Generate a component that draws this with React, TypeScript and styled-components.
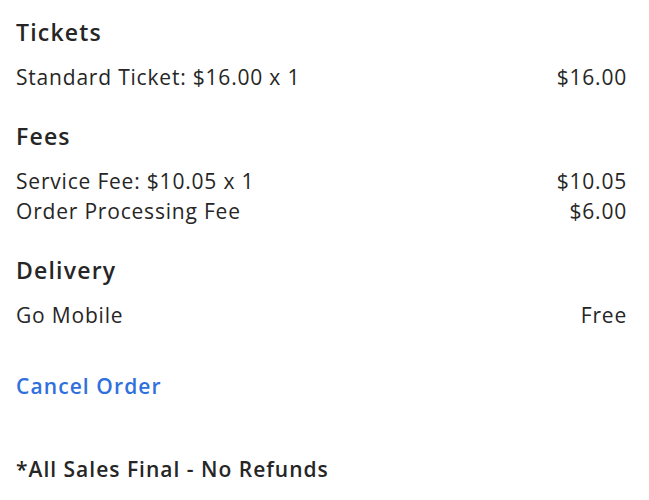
import React from 'react';
import styled, { createGlobalStyle } from 'styled-components';

const GlobalStyle = createGlobalStyle`
  html, body {
    margin: 0;
    padding: 0;
    background: #ffffff;
  }
  body {
    font-family: "Open Sans", Lato, Arial, sans-serif;
    color: #262626;
  }
`;

const Summary = styled.div`
  display: flex;
  flex-direction: column;
  padding: 17px 22px 0 16px;
`;

const Section = styled.section`
  display: flex;
  flex-direction: column;
  margin-bottom: 29px;
`;

const Heading = styled.h3`
  margin: 0 0 15px;
  font-size: 23px;
  line-height: 30px;
  font-weight: 600;
  letter-spacing: 1.2px;
  color: #262626;
`;

const Row = styled.div`
  display: flex;
  justify-content: space-between;
  align-items: center;
  font-size: 21px;
  line-height: 30px;
  letter-spacing: 0.8px;
  color: #262626;
`;

const CancelLink = styled.a`
  display: block;
  margin-top: 12px;
  font-size: 21px;
  line-height: 30px;
  font-weight: 600;
  letter-spacing: 1.1px;
  color: #3070dd;
  text-decoration: none;
  cursor: pointer;
`;

const Disclaimer = styled.p`
  margin: 53px 0 0;
  font-size: 21px;
  line-height: 30px;
  font-weight: 600;
  letter-spacing: 1px;
  color: #262626;
`;

interface LineItem {
  label: string;
  amount: string;
}

const sections: { title: string; items: LineItem[] }[] = [
  { title: 'Tickets', items: [{ label: 'Standard Ticket: $16.00 x 1', amount: '$16.00' }] },
  {
    title: 'Fees',
    items: [
      { label: 'Service Fee: $10.05 x 1', amount: '$10.05' },
      { label: 'Order Processing Fee', amount: '$6.00' },
    ],
  },
  { title: 'Delivery', items: [{ label: 'Go Mobile', amount: 'Free' }] },
];

export default function App() {
  return (
    <>
      <GlobalStyle />
      <Summary>
        {sections.map((s) => (
          <Section key={s.title}>
            <Heading>{s.title}</Heading>
            {s.items.map((item) => (
              <Row key={item.label}>
                <span>{item.label}</span>
                <span>{item.amount}</span>
              </Row>
            ))}
          </Section>
        ))}
        <CancelLink>Cancel Order</CancelLink>
        <Disclaimer>*All Sales Final - No Refunds</Disclaimer>
      </Summary>
    </>
  );
}
